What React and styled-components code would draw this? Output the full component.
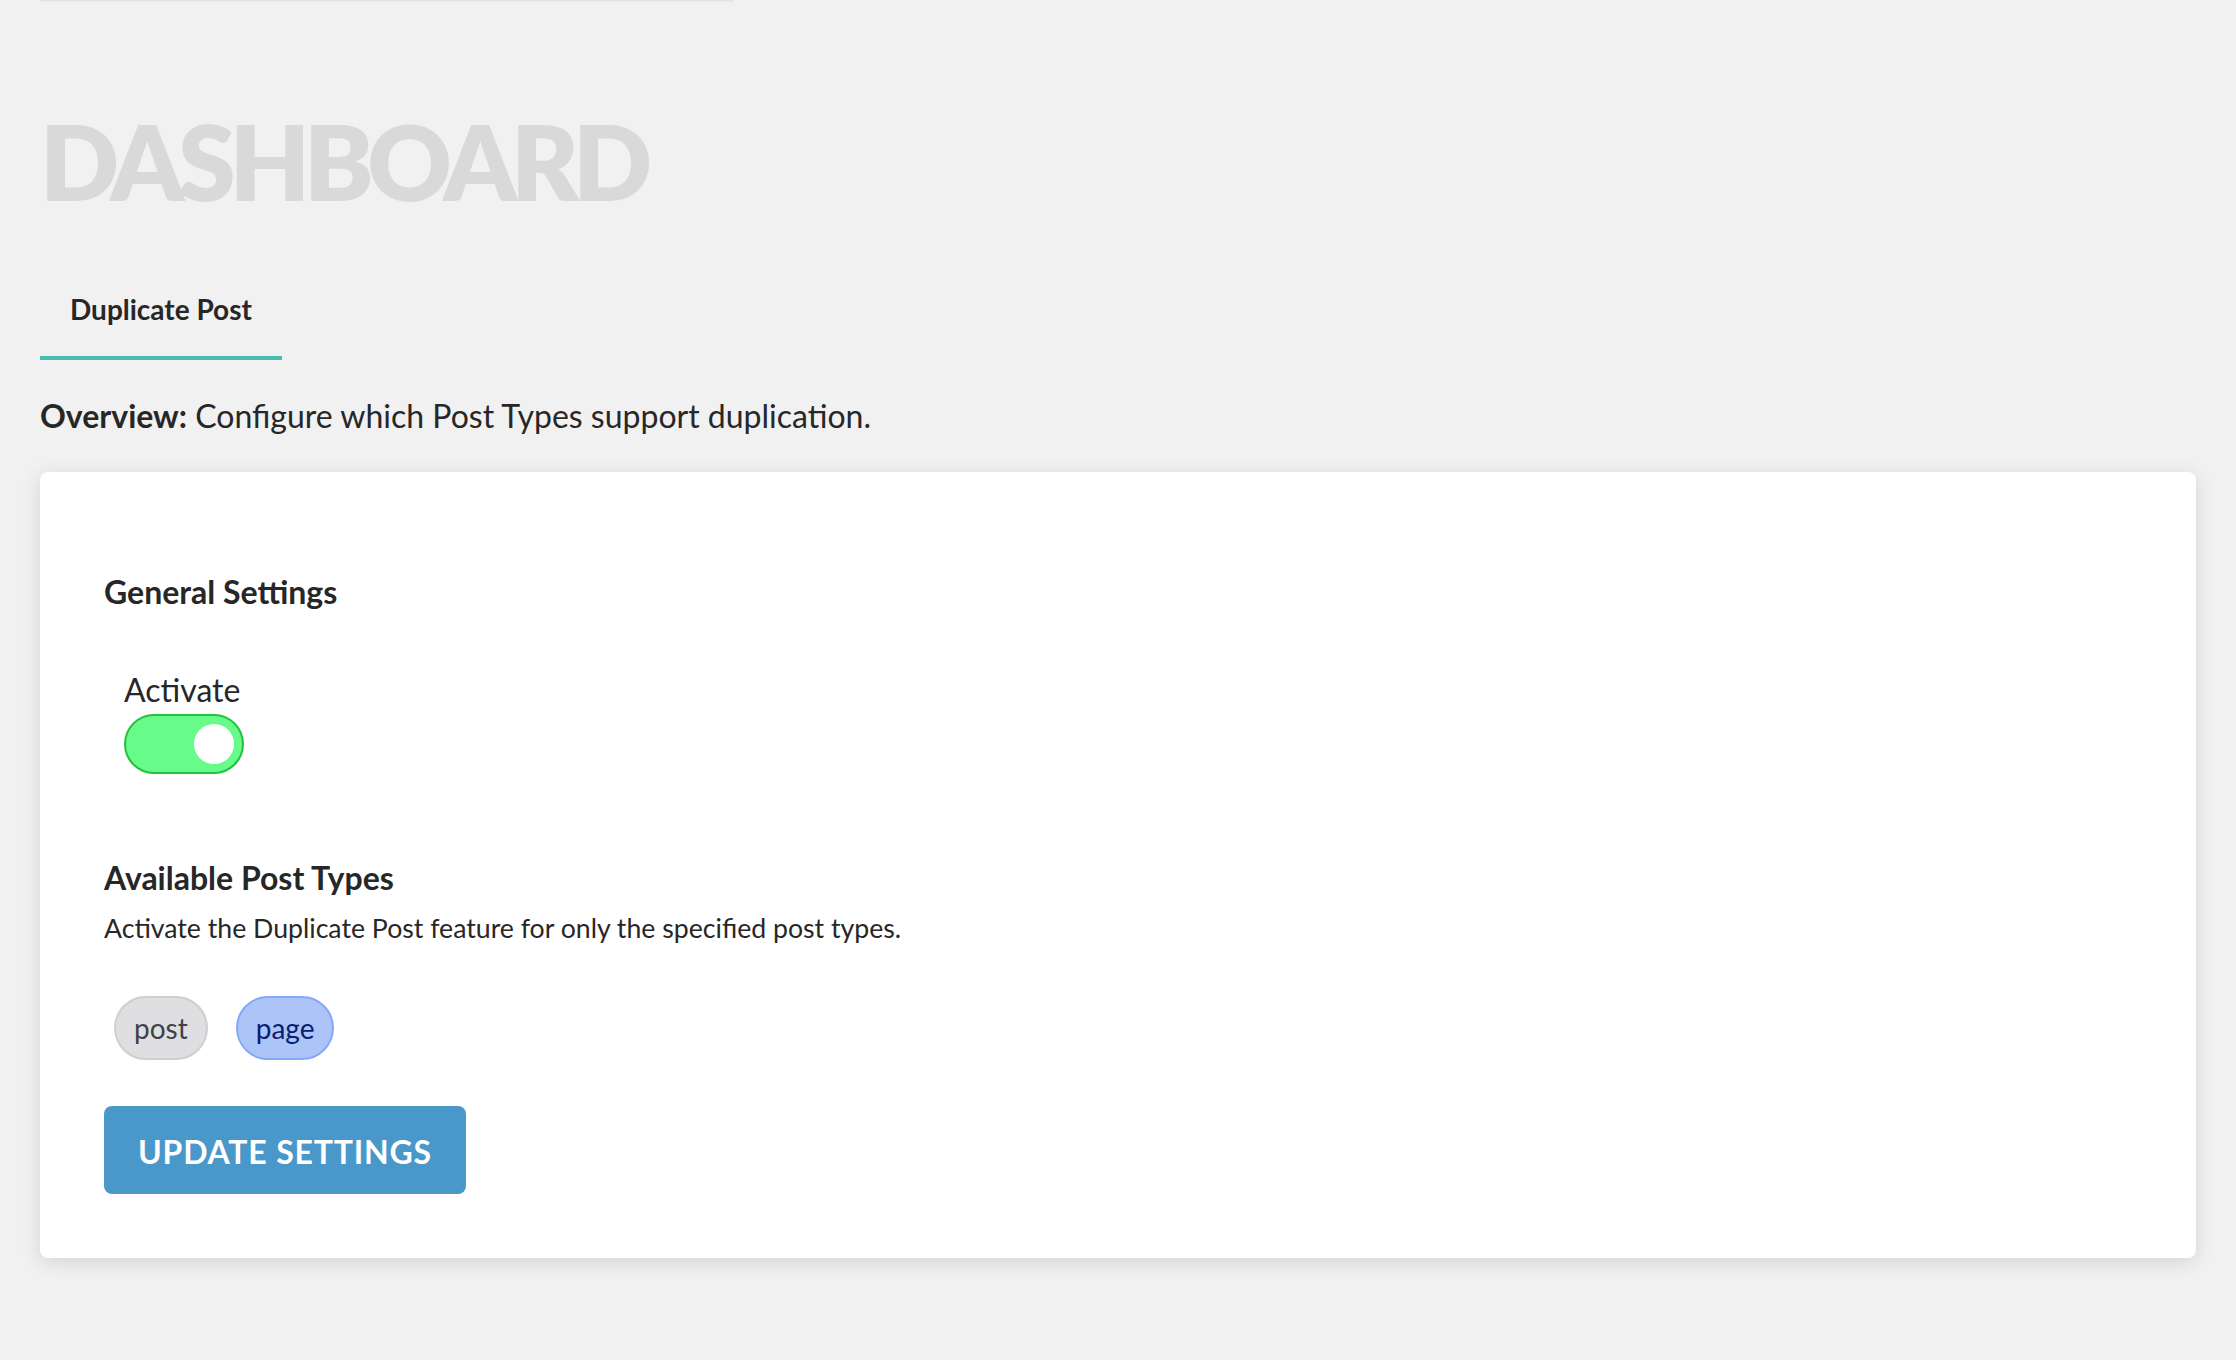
import React, { useState } from "react";
import styled, { createGlobalStyle } from "styled-components";

const GlobalStyle = createGlobalStyle`
  *, *::before, *::after { box-sizing: border-box; }
  body {
    margin: 0;
    background: #f1f1f1;
    color: #272727;
    font-family: Lato, "Liberation Sans", sans-serif;
    font-size: 32px;
    line-height: 48px;
    -webkit-font-smoothing: antialiased;
  }
`;

const Page = styled.main`
  display: flex;
  flex-direction: column;
  padding: 0 40px 100px;
`;

const NoticeEdge = styled.hr`
  width: 694px;
  max-width: 100%;
  height: 1px;
  margin: 0 0 104px;
  border: 0;
  background: #e3e3e3;
  box-shadow: 0 1px 1px rgba(0, 0, 0, 0.03);
`;

const Title = styled.h1`
  margin: 0 0 45px;
  color: #d9d9d9;
  font-size: 104px;
  font-weight: 800;
  line-height: 112px;
  letter-spacing: -0.06em;
  text-transform: uppercase;
`;

const Tabs = styled.nav`
  display: flex;
`;

const Tab = styled.a`
  padding: 31px 30px;
  border-bottom: 4px solid #48bfae;
  color: inherit;
  font-size: 28px;
  font-weight: 700;
  line-height: 32px;
  text-decoration: none;
`;

const Overview = styled.p`
  margin: 32px 0;
`;

const Card = styled.form`
  padding: 96px 64px 64px;
  border-radius: 8px;
  background: #fff;
  box-shadow: 0 4px 20px rgba(0, 0, 0, 0.12);
`;

const Section = styled.section`
  margin-bottom: ${(p) => p.$gap};
`;

const Heading = styled.h2`
  margin: 0;
  font-size: 32px;
  font-weight: 700;
`;

const Hint = styled.p`
  margin: 2px 0 0;
  font-size: smaller;
`;

const ToggleField = styled.label`
  display: flex;
  flex-direction: column;
  align-items: flex-start;
  width: max-content;
  margin: 50px 0 0 20px;
`;

const Toggle = styled.input`
  appearance: none;
  display: flex;
  align-items: center;
  justify-content: flex-start;
  width: 120px;
  height: 60px;
  margin: 0;
  padding: 0 8px;
  border: 2px solid #b8b8bc;
  border-radius: 30px;
  background: #dfdfe1;
  cursor: pointer;

  &::before {
    content: "";
    width: 40px;
    height: 40px;
    border-radius: 50%;
    background: #fff;
  }

  &:checked {
    justify-content: flex-end;
    border-color: #25c03f;
    background: #67fb89;
  }
`;

const Chips = styled.div`
  display: flex;
  gap: 28px;
  margin: 44px 0 0 10px;
`;

const Chip = styled.button`
  padding: 6px 18px;
  border: 2px solid ${(p) => (p.$active ? "#86a8f8" : "#cfcfd1")};
  border-radius: 32px;
  background: ${(p) => (p.$active ? "#adc4f8" : "#dfdfe1")};
  color: ${(p) => (p.$active ? "#07206f" : "#41414a")};
  font: inherit;
  font-size: 28px;
  cursor: pointer;
`;

const Submit = styled.button`
  display: block;
  padding: 22px 34px 18px;
  border: 0;
  border-radius: 8px;
  background: #4a97c9;
  color: #fff;
  font: inherit;
  font-weight: 700;
  letter-spacing: 0.025em;
  text-transform: uppercase;
  cursor: pointer;
`;

export default function App() {
  const [active, setActive] = useState(true);
  const [types, setTypes] = useState({ post: false, page: true });

  return (
    <>
      <GlobalStyle />
      <Page>
        <NoticeEdge />
        <Title>Dashboard</Title>
        <Tabs>
          <Tab href="#duplicate-post">Duplicate Post</Tab>
        </Tabs>
        <Overview>
          <b>Overview:</b> Configure which Post Types support duplication.
        </Overview>
        <Card onSubmit={(e) => e.preventDefault()}>
          <Section $gap="80px">
            <Heading>General Settings</Heading>
            <ToggleField>
              Activate
              <Toggle
                type="checkbox"
                checked={active}
                onChange={(e) => setActive(e.target.checked)}
              />
            </ToggleField>
          </Section>
          <Section $gap="46px">
            <Heading>Available Post Types</Heading>
            <Hint>Activate the Duplicate Post feature for only the specified post types.</Hint>
            <Chips>
              {Object.keys(types).map((name) => (
                <Chip
                  key={name}
                  type="button"
                  aria-pressed={types[name]}
                  $active={types[name]}
                  onClick={() => setTypes({ ...types, [name]: !types[name] })}
                >
                  {name}
                </Chip>
              ))}
            </Chips>
          </Section>
          <Submit type="submit">Update Settings</Submit>
        </Card>
      </Page>
    </>
  );
}
